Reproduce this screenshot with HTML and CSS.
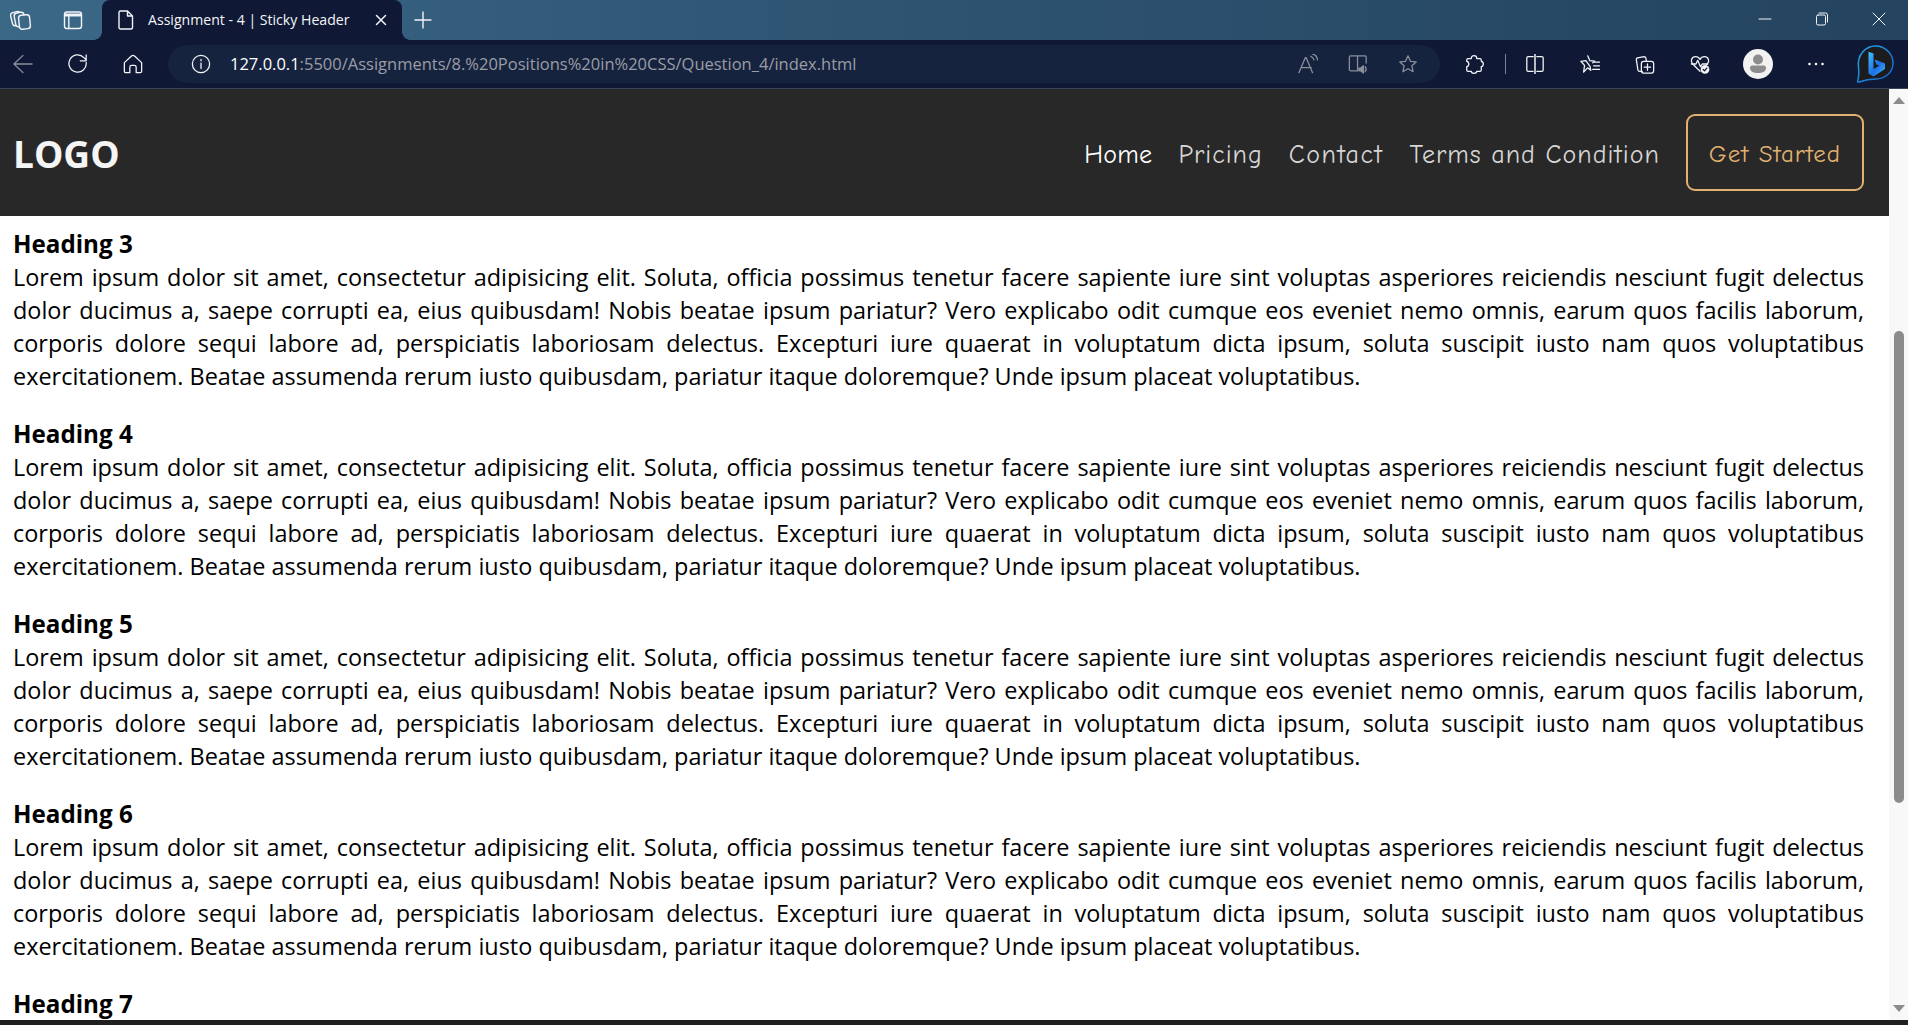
FILE: index.html
```html
<!DOCTYPE html>
<html lang="en">
<head>
<meta charset="utf-8">
<title>Assignment - 4 | Sticky Header</title>
<link rel="stylesheet" href="styles.css">
</head>
<body>
<div class="browser">
  <div class="tabbar">
    <div class="tab-tools">
      <svg class="ico i22 stack" viewBox="0 0 22 22"><rect x="1.500" y="3" width="10" height="13.500" rx="3" transform="rotate(-14 6 10)"/><rect x="4.800" y="3.500" width="10" height="14" rx="3" transform="rotate(-11 10 10)"/><rect x="9" y="6" width="11" height="14" rx="2.800" transform="rotate(-6 14 13)"/></svg>
      <svg class="ico i22" viewBox="0 0 22 22"><rect x="2.500" y="3" width="17" height="16.500" rx="2.500"/><path d="M3 4.500h16v3H3z" fill="#f2f4f7" stroke="none"/><path d="M6.800 7.500v12"/></svg>
    </div>
    <div class="tab">
      <svg class="ico doc" viewBox="0 0 16 20"><path d="M2.500 1h7l5 5v11.500a1.500 1.500 0 0 1-1.500 1.500H2.500A1.500 1.500 0 0 1 1 17.500v-15A1.500 1.500 0 0 1 2.500 1zM9.500 1v5h5"/></svg>
      <span class="tab-title">Assignment - 4 | Sticky Header</span>
      <svg class="ico close" viewBox="0 0 12 12"><path d="M1.500 1.500l9 9M10.500 1.500l-9 9"/></svg>
    </div>
    <svg class="ico plus" viewBox="0 0 18 18"><path d="M9 1v16M1 9h16"/></svg>
    <div class="win-controls">
      <svg class="ico win" viewBox="0 0 14 14"><path d="M1 7h12"/></svg>
      <svg class="ico win" viewBox="0 0 14 14"><rect x="1.500" y="3" width="9" height="10" rx="1.500"/><path d="M4 1h6.500A2 2 0 0 1 12.500 3v7"/></svg>
      <svg class="ico win" viewBox="0 0 14 14"><path d="M1 1l12 12M13 1L1 13"/></svg>
    </div>
  </div>
  <div class="toolbar">
    <svg class="ico tb dim" viewBox="0 0 22 22"><path d="M21 11H1M11 1.500 1 11l10 9.500"/></svg>
    <svg class="ico tb" viewBox="0 0 22 22"><path d="M20 9.500A9.500 9.500 0 1 1 17.500 4L20 6.500M20 1v6.500h-6.500"/></svg>
    <svg class="ico tb" viewBox="0 0 22 22"><path d="M1.500 9.500 9.300 2.200Q11 .8 12.700 2.200L20.500 9.500V19Q20.500 20.500 19 20.500H14.500V14.500Q14.500 12.500 12.500 12.500H9.500Q7.500 12.500 7.500 14.500V20.500H3Q1.500 20.500 1.500 19Z"/></svg>
    <div class="address">
      <svg class="ico tb" viewBox="0 0 22 22"><circle cx="11" cy="11" r="9.500"/><path d="M11 10v6M11 6v1.500"/></svg>
      <span class="url"><span class="host">127.0.0.1</span>:5500/Assignments/8.%20Positions%20in%20CSS/Question_4/index.html</span>
      <div class="addr-actions">
        <svg class="ico tb dim" viewBox="0 0 22 22"><path d="M1 20.500 8 4h1l7 16.500M3.500 15h11M14 2.500c1.800.5 3 2 3.500 4M16 0c3 .5 5 3 5.500 6.500"/></svg>
        <svg class="ico tb dim" viewBox="0 0 22 22"><path d="M10.500 18.500H3a1.500 1.500 0 0 1-1.500-1.500V3.500A1.500 1.500 0 0 1 3 2h7.500v16.500zM10.500 2h8A1.500 1.500 0 0 1 20 3.500V10"/><path d="M12 15.500h2l3-2.500v8l-3-2.500h-2z" fill="#8a8f9b"/><path d="M19 14c1 1.500 1 4 0 5.500"/></svg>
        <svg class="ico tb dim" viewBox="0 0 22 22"><path d="M11 2l2.700 6 6.300.7-4.700 4.300 1.300 6.500L11 16.200 5.400 19.500l1.300-6.500L2 8.700 8.300 8z"/></svg>
      </div>
    </div>
    <div class="tools">
      <svg class="ico tb" viewBox="0 0 22 22"><path d="M8 4.500C8 1 14 1 14 4.500V5H17.500Q19 5 19 6.500V8C22 8.500 22 13.500 19 14V17.500Q19 19 17.500 19H14C14 22 8 22 8 19H4.500Q3 19 3 17.500V14C6 13.500 6 8.500 3 8V6.500Q3 5 4.500 5H8Z"/></svg>
      <span class="sep"></span>
      <svg class="ico tb" viewBox="0 0 22 22"><path d="M9 3H3.500Q2 3 2 4.500v13Q2 19 3.500 19H9M13 3h5.500Q20 3 20 4.500v13q0 1.500-1.500 1.500H13"/><path class="split-line" d="M11 .5v21"/></svg>
      <svg class="ico tb" viewBox="0 0 22 22"><path d="M8.500 2l2.300 5.300 5.200.5-2 2M11 13.500l.8 4.500-3.500-2.800L4 20l1-7.500L1 8l5.500-.7zM16 9H21.500M15 13H21.500M14 17H21.500"/></svg>
      <svg class="ico tb" viewBox="0 0 22 22"><path d="M8 19 5 19c-1 0-1.500-.7-1.800-1.500L1.500 6.500c-.2-1 .3-2 1.300-2.200L10 3c1 0 1.800.5 2 1.500l.5 3"/><rect x="7" y="8" width="13.500" height="13" rx="2.500"/><path d="M13.700 11v7M10.200 14.500h7"/></svg>
      <svg class="ico tb" viewBox="0 0 22 22"><path d="M11 19 3 11C0 7.500 2 3 6 3c2 0 4 1 5 3 1-2 3-3 5-3 4 0 6 4.500 3 8l-1 1"/><path d="M1.500 11h5l2-4 3 7 2-3h6"/><circle cx="16.500" cy="17" r="4.800" fill="#f2f4f7" stroke="none"/><path d="M14.500 17l1.500 1.500 2.500-3" stroke="#0f1936"/></svg>
      <div class="avatar"><svg viewBox="0 0 30 30"><circle cx="15" cy="10.500" r="5" fill="#8c8c8c"/><path d="M7 18.500c0-1 1-2 2-2h12c1 0 2 1 2 2 0 4-3 5.500-8 5.500s-8-1.500-8-5.500z" fill="#8c8c8c"/></svg></div>
      <svg class="ico dots" viewBox="0 0 20 6"><circle cx="3.500" cy="3" r="1.300"/><circle cx="10" cy="3" r="1.300"/><circle cx="16.500" cy="3" r="1.300"/></svg>
      <svg class="bing" viewBox="0 0 38 38">
        <defs>
          <linearGradient id="bg" x1="0" y1="0" x2="1" y2="1"><stop offset="0" stop-color="#3fc6f8"/><stop offset=".55" stop-color="#1d6fe8"/><stop offset="1" stop-color="#37b4f0"/></linearGradient>
          <linearGradient id="ring" x1="0" y1="0" x2="1" y2="1"><stop offset="0" stop-color="#22a8ee"/><stop offset="1" stop-color="#1560c8"/></linearGradient>
        </defs>
        <path d="M19.500 1C29 1 37 8.500 37 18C37 27.500 29 34 20 34C14 34 10 34.500 3 37C1 37.500 1.500 36 2 34.500C3 31 3 27 2.500 22C1 9.500 10 1 19.500 1Z" fill="#1c1c1e" stroke="url(#ring)" stroke-width="1.500"/>
        <path d="M12.500 6.700L17.500 8.500V24L23.500 20.800L20.500 19.500L18.500 14.500L29 18.500V24L17.500 31.500L12.500 28.500Z" fill="url(#bg)"/>
      </svg>
    </div>
  </div>
</div>
<div class="viewport">
  <div class="page">
    <header class="site-header">
      <div class="logo">LOGO</div>
      <nav class="nav">
        <a class="nav-link active">Home</a>
        <a class="nav-link">Pricing</a>
        <a class="nav-link contact">Contact</a>
        <a class="nav-link">Terms and Condition</a>
        <a class="cta">Get Started</a>
      </nav>
    </header>
    <main class="content">
      <section class="block"><h3>Heading 3</h3><p>Lorem ipsum dolor sit amet, consectetur adipisicing elit. Soluta, officia possimus tenetur facere sapiente iure sint voluptas asperiores reiciendis nesciunt fugit delectus dolor ducimus a, saepe corrupti ea, eius quibusdam! Nobis beatae ipsum pariatur? Vero explicabo odit cumque eos eveniet nemo omnis, earum quos facilis laborum, corporis dolore sequi labore ad, perspiciatis laboriosam delectus. Excepturi iure quaerat in voluptatum dicta ipsum, soluta suscipit iusto nam quos voluptatibus exercitationem. Beatae assumenda rerum iusto quibusdam, pariatur itaque doloremque? Unde ipsum placeat voluptatibus.</p></section>
      <section class="block"><h3>Heading 4</h3><p>Lorem ipsum dolor sit amet, consectetur adipisicing elit. Soluta, officia possimus tenetur facere sapiente iure sint voluptas asperiores reiciendis nesciunt fugit delectus dolor ducimus a, saepe corrupti ea, eius quibusdam! Nobis beatae ipsum pariatur? Vero explicabo odit cumque eos eveniet nemo omnis, earum quos facilis laborum, corporis dolore sequi labore ad, perspiciatis laboriosam delectus. Excepturi iure quaerat in voluptatum dicta ipsum, soluta suscipit iusto nam quos voluptatibus exercitationem. Beatae assumenda rerum iusto quibusdam, pariatur itaque doloremque? Unde ipsum placeat voluptatibus.</p></section>
      <section class="block"><h3>Heading 5</h3><p>Lorem ipsum dolor sit amet, consectetur adipisicing elit. Soluta, officia possimus tenetur facere sapiente iure sint voluptas asperiores reiciendis nesciunt fugit delectus dolor ducimus a, saepe corrupti ea, eius quibusdam! Nobis beatae ipsum pariatur? Vero explicabo odit cumque eos eveniet nemo omnis, earum quos facilis laborum, corporis dolore sequi labore ad, perspiciatis laboriosam delectus. Excepturi iure quaerat in voluptatum dicta ipsum, soluta suscipit iusto nam quos voluptatibus exercitationem. Beatae assumenda rerum iusto quibusdam, pariatur itaque doloremque? Unde ipsum placeat voluptatibus.</p></section>
      <section class="block"><h3>Heading 6</h3><p>Lorem ipsum dolor sit amet, consectetur adipisicing elit. Soluta, officia possimus tenetur facere sapiente iure sint voluptas asperiores reiciendis nesciunt fugit delectus dolor ducimus a, saepe corrupti ea, eius quibusdam! Nobis beatae ipsum pariatur? Vero explicabo odit cumque eos eveniet nemo omnis, earum quos facilis laborum, corporis dolore sequi labore ad, perspiciatis laboriosam delectus. Excepturi iure quaerat in voluptatum dicta ipsum, soluta suscipit iusto nam quos voluptatibus exercitationem. Beatae assumenda rerum iusto quibusdam, pariatur itaque doloremque? Unde ipsum placeat voluptatibus.</p></section>
      <section class="block"><h3>Heading 7</h3></section>
    </main>
  </div>
  <div class="scrollbar">
    <span class="arrow-up"></span>
    <div class="track"><div class="thumb"></div></div>
    <span class="arrow-down"></span>
  </div>
</div>
<div class="taskbar-edge"></div>
</body>
</html>
```

FILE: styles.css
```css
* { box-sizing: border-box; }
html, body { margin: 0; height: 100%; overflow: hidden; }
body {
  display: flex;
  flex-direction: column;
  width: 1908px;
  height: 1025px;
  background: #fff;
  font-family: "Open Sans", "Noto Sans", sans-serif;
}
.browser { flex: none; }
.ico { fill: none; stroke: #f2f4f7; stroke-width: 1.400; stroke-linecap: round; stroke-linejoin: round; flex: none; display: block; }
.tabbar {
  height: 40px;
  display: flex;
  align-items: center;
  background: linear-gradient(90deg, #3c6888 0%, #2f5674 40%, #24435f 100%);
}
.tab-tools { display: flex; align-items: center; gap: 30px; padding-left: 10px; width: 102px; }
.i22 { width: 22px; height: 22px; }
.stack rect { fill: #3c6888; }
.tab {
  position: relative;
  width: 300px;
  height: 40px;
  display: flex;
  align-items: center;
  background: #0f1936;
  border-radius: 8px 8px 0 0;
  padding: 0 15px 0 16px;
}
.tab::before, .tab::after {
  content: "";
  position: absolute;
  bottom: 0;
  width: 8px;
  height: 8px;
}
.tab::before { left: -8px; background: radial-gradient(circle at 0 0, transparent 7.500px, #0f1936 8px); }
.tab::after { right: -8px; background: radial-gradient(circle at 100% 0, transparent 7.500px, #0f1936 8px); }
.doc { width: 16px; height: 20px; }
.tab-title {
  margin-left: 14px;
  padding-bottom: 2px;
  flex: 1;
  color: #f4f5f7;
  font: 14.100px "Open Sans", sans-serif;
  white-space: nowrap;
}
.close { width: 12px; height: 12px; stroke-width: 1.500; }
.plus { width: 18px; height: 18px; margin-left: 12px; }
.win-controls { margin-left: auto; display: flex; align-items: center; gap: 43px; padding: 0 22px 2px 0; }
.win { width: 14px; height: 14px; stroke-width: 1; }
.toolbar {
  height: 49px;
  display: flex;
  align-items: center;
  gap: 35px;
  padding: 0 0 1px 13px;
  background: #0f1936;
  border-bottom: 1px solid #3a4358;
}
.tb { width: 20px; height: 20px; }
.dim { stroke: #8a8f9b; }
.address {
  width: 1272px;
  height: 38px;
  margin-left: -10px;
  display: flex;
  align-items: center;
  padding: 0 22px 0 23px;
  background: #16233f;
  border-radius: 19px;
}
.url {
  margin-left: 19px;
  color: #9a9da5;
  font: 16.500px "Open Sans", sans-serif;
  white-space: nowrap;
}
.host { color: #fff; }
.addr-actions { margin-left: auto; display: flex; gap: 30px; }
.tools { display: flex; align-items: center; margin-left: -11px; gap: 35px; }
.sep { width: 1px; height: 20px; background: #7c8294; margin: 0 -16px 0 -14px; }
.split-line { stroke-width: 2; stroke: #c9ccd3; }
.avatar { width: 30px; height: 30px; border-radius: 50%; background: #f2f2f2; flex: none; margin-left: -2px; }
.avatar svg { display: block; width: 30px; height: 30px; }
.dots { width: 20px; height: 6px; stroke: none; fill: #f2f4f7; margin-left: -2px; }
.bing { width: 38px; height: 38px; flex: none; display: block; margin-left: -5px; }
.viewport { flex: 1; min-height: 0; display: flex; }
.page { flex: 1; min-width: 0; overflow: hidden; }
.site-header {
  height: 127px;
  display: flex;
  align-items: center;
  justify-content: space-between;
  padding: 0 25px 0 13px;
  background: #282828;
}
.logo { color: #f5f5f5; font: 700 37px "Open Sans", sans-serif; padding-top: 1px; }
.nav { display: flex; align-items: center; gap: 26px; }
.nav-link { color: #d6d6d6; font: 26px "Comic Neue", "Comic Sans MS", "Lato", sans-serif; letter-spacing: 1px; padding-top: 4px; }
.nav-link.active { color: #fff; letter-spacing: .25px; }
.nav-link.contact { letter-spacing: 1.5px; }
.cta {
  color: #e0b272;
  font: 25px "Comic Neue", "Comic Sans MS", "Lato", sans-serif;
  letter-spacing: 1px;
  padding: 23px 21px 21px;
  border: 2px solid #e0b272;
  border-radius: 9px;
}
.content { padding: 11px 25px 0 13px; color: #000; }
.block { margin-bottom: 24px; }
h3 { margin: 0; font: 700 24.200px/33px "Open Sans", sans-serif; }
p { margin: 0; padding-top: 1px; font: 23.450px/33px "Open Sans", sans-serif; text-align: justify; }
.scrollbar { width: 19px; flex: none; display: flex; flex-direction: column; align-items: center; background: #f8f8f8; }
.track { flex: 1; width: 100%; padding-top: 219px; }
.thumb { width: 10px; height: 472px; margin: 0 auto; background: #8c8c8c; border-radius: 5px; }
.arrow-up, .arrow-down { width: 0; height: 0; border-left: 6px solid transparent; border-right: 6px solid transparent; margin: 8px 0; }
.arrow-up { border-bottom: 7px solid #8c8c8c; }
.arrow-down { border-top: 7px solid #8c8c8c; }
.taskbar-edge { flex: none; height: 5px; background: #1f1f1f; }
```
